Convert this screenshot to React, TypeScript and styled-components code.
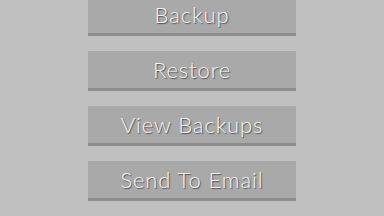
import { createGlobalStyle, styled } from "styled-components";

const ACTIONS = ["Backup", "Restore", "View Backups", "Send To Email"] as const;

const GlobalStyle = createGlobalStyle`
  html, body {
    margin: 0;
    padding: 0;
    background: #c0c0c0;
    overflow: hidden;
  }
`;

const Page = styled.main`
  box-sizing: border-box;
  width: 384px;
  height: 216px;
  background: #c0c0c0;
  overflow: hidden;
  display: flex;
  justify-content: center;
`;

const ButtonList = styled.div`
  display: flex;
  flex-direction: column;
  gap: 15px;
  margin-top: -4px;
  width: 208px;
`;

const ActionButton = styled.button`
  box-sizing: border-box;
  height: 40px;
  width: 100%;
  padding: 0 0 1px;
  border: none;
  border-bottom: 3px solid #8d8d8d;
  background: #a9a9a9;
  color: #f4f4f4;
  font-family: Lato, "Open Sans", sans-serif;
  font-weight: 300;
  font-size: 22px;
  letter-spacing: 0.9px;
  text-shadow: 1px 1px 1px #505050;
  cursor: pointer;
`;

const App = () => (
  <Page>
    <GlobalStyle />
    <ButtonList>
      {ACTIONS.map((label) => (
        <ActionButton key={label} type="button">
          {label}
        </ActionButton>
      ))}
    </ButtonList>
  </Page>
);

export default App;
